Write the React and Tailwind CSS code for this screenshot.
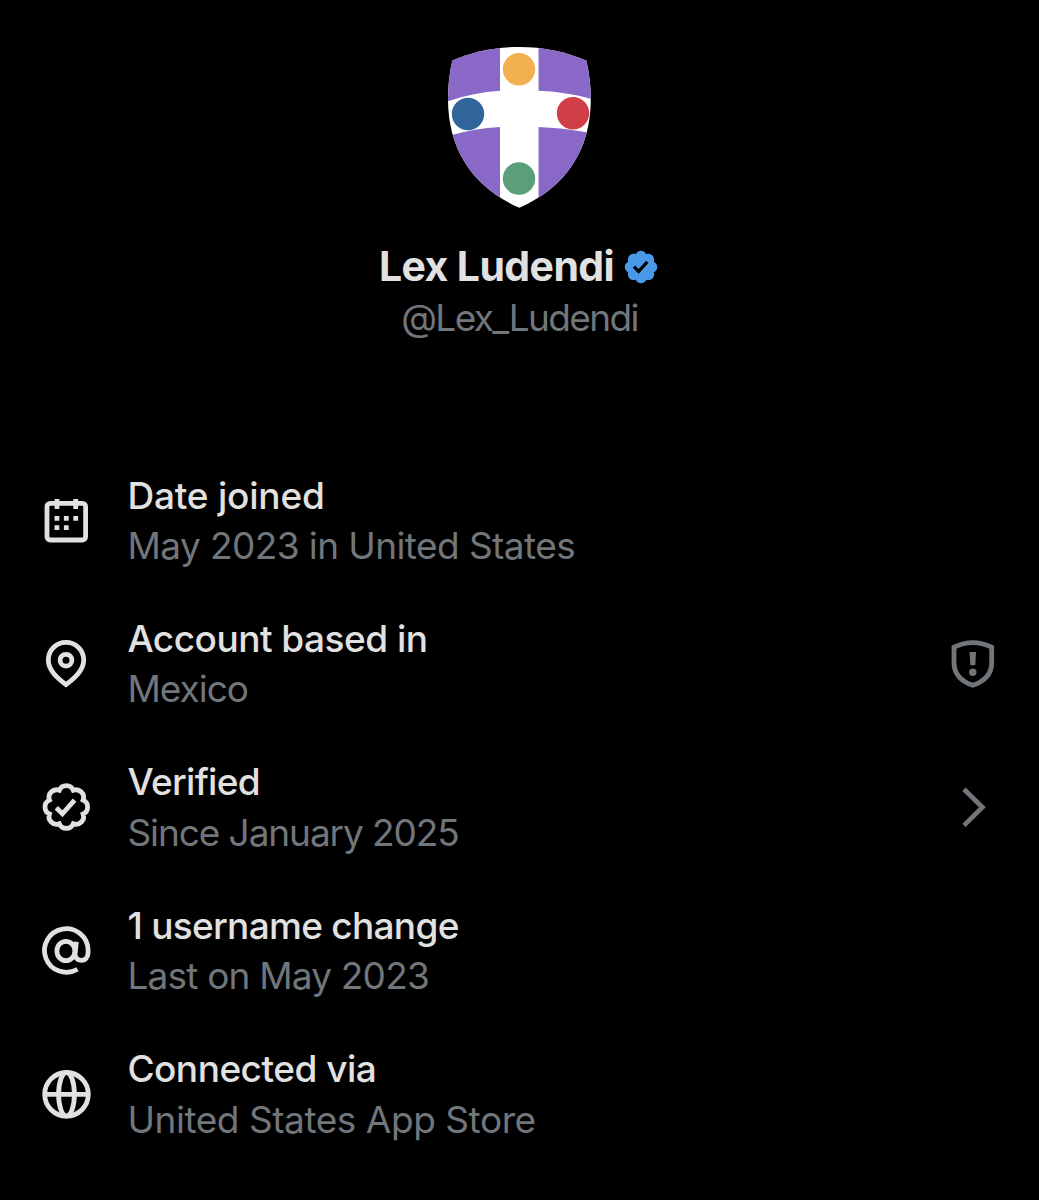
import React from 'react';

const ShieldAvatar = () => (
  <svg viewBox="0 0 180 190" className="h-[190px] w-[180px]">
    <defs>
      <clipPath id="shield">
        <path d="M22.4 30.6C44 21.5 66 17 89.5 17S135 21.5 156.3 30.6C159 42 160.8 55 160.8 69C160.8 122 134 158 89.3 177.8C45 158 18 122 18 69C18 55 19.6 42 22.4 30.6Z" />
      </clipPath>
    </defs>
    <g clipPath="url(#shield)">
      <rect width="180" height="190" fill="#fff" />
      <path d="M10 10H70V60.8C52 62 35 65.5 17 71.5L10 74Z" fill="#8a68c8" />
      <path d="M108.5 10H170V71L161 68.8C143 64 126 61.5 108.5 60.8Z" fill="#8a68c8" />
      <path d="M10 108L20 105.5C37 100.5 53 97.8 70 97V190H10Z" fill="#8a68c8" />
      <path d="M108.5 97C124 97.5 141 99.5 158 102.5L170 105V190H108.5Z" fill="#8a68c8" />
    </g>
    <circle cx="89" cy="39.3" r="16.2" fill="#f2b04e" />
    <circle cx="38" cy="84" r="16.2" fill="#31659c" />
    <circle cx="143" cy="83.2" r="16.2" fill="#d03e48" />
    <circle cx="89" cy="148.5" r="16.2" fill="#5a9f78" />
  </svg>
);

const VerifiedBadge = () => (
  <svg viewBox="0 0 22 22" className="h-[38px] w-[38px]" fill="#4a99e9">
    <path d="M20.396 11c-.018-.646-.215-1.275-.57-1.816-.354-.54-.852-.972-1.438-1.246.223-.607.27-1.264.14-1.897-.131-.634-.437-1.218-.882-1.687-.47-.445-1.053-.75-1.687-.882-.633-.13-1.29-.083-1.897.14-.273-.587-.704-1.086-1.245-1.44S11.647 1.62 11 1.604c-.646.017-1.273.213-1.813.568s-.969.854-1.24 1.44c-.608-.223-1.267-.272-1.902-.14-.635.13-1.22.436-1.69.882-.445.47-.749 1.055-.878 1.688-.13.633-.08 1.29.144 1.896-.587.274-1.087.705-1.443 1.245-.356.54-.555 1.17-.574 1.817.02.647.218 1.276.574 1.817.356.54.856.972 1.443 1.245-.224.606-.274 1.263-.144 1.896.13.634.433 1.218.877 1.688.47.443 1.054.747 1.687.878.633.132 1.29.084 1.897-.136.274.586.705 1.084 1.246 1.439.54.354 1.17.551 1.816.569.647-.016 1.276-.213 1.817-.567s.972-.854 1.245-1.44c.604.239 1.266.296 1.903.164.636-.132 1.22-.447 1.68-.907.46-.46.776-1.044.908-1.681s.075-1.299-.165-1.903c.586-.274 1.084-.705 1.439-1.246.354-.54.551-1.17.569-1.816zM9.662 14.85l-3.429-3.428 1.293-1.302 2.072 2.072 4.4-4.794 1.347 1.246z" />
  </svg>
);

const Icon = ({ children, className = 'text-[#e1e1e1]' }) => (
  <svg
    viewBox="0 0 60 60"
    className={`h-[60px] w-[60px] shrink-0 ${className}`}
    fill="none"
    stroke="currentColor"
    strokeWidth="4.8"
  >
    {children}
  </svg>
);

const CalendarIcon = () => (
  <Icon>
    <rect x="11" y="12.3" width="38.6" height="36.7" rx="3.2" />
    <path d="M21 8V18M39.7 8V18" />
    <path d="M18.5 27.3h4.8M27.9 27.3h4.8M37.3 27.3h4.8M18.5 36.6h4.8M27.9 36.6h4.8" />
  </Icon>
);

const PinIcon = () => (
  <Icon>
    <path d="M30 50.6C22 44.5 12.3 36.5 12.3 26A17.7 17.7 0 0 1 47.7 26C47.7 36.5 38 44.5 30 50.6Z" />
    <circle cx="30" cy="26.2" r="5.9" />
  </Icon>
);

const SealIcon = () => (
  <Icon>
    <path d="M23.3 12.3A7.6 7.6 0 0 1 37.3 12.3A7.6 7.6 0 0 1 47.1 22.1A7.6 7.6 0 0 1 47.1 36A7.6 7.6 0 0 1 37.3 45.8A7.6 7.6 0 0 1 23.3 45.8A7.6 7.6 0 0 1 13.5 36A7.6 7.6 0 0 1 13.5 22.1A7.6 7.6 0 0 1 23.3 12.3Z" />
    <path d="M20.3 29.8L26.4 35.8L38.6 22.2" />
  </Icon>
);

const AtIcon = () => (
  <Icon>
    <path d="M41.5 48.2A21.8 21.8 0 1 1 52.1 29.3V31C52.1 36 49.6 39.3 45.4 39.3C41 39.3 38.8 36.5 39.1 32.5L40.3 20.8" />
    <ellipse cx="29.9" cy="30" rx="9" ry="9.7" />
  </Icon>
);

const GlobeIcon = () => (
  <Icon>
    <circle cx="30.5" cy="29.3" r="21.8" />
    <ellipse cx="30.5" cy="29.3" rx="7.9" ry="21.8" />
    <path d="M8.6 29.3H52.4" />
  </Icon>
);

const ShieldAlertIcon = () => (
  <Icon className="text-[#71767b]">
    <path d="M11 13.2Q29.8 4 48.7 13.2V28.5C48.7 40.5 41 47.5 29.8 51.3C18.7 47.5 11 40.5 11 28.5Z" />
    <path d="M26.6 18H33L32.3 31.3H27.3Z" fill="currentColor" stroke="none" />
    <circle cx="29.8" cy="38.3" r="3.7" fill="currentColor" stroke="none" />
  </Icon>
);

const ChevronIcon = () => (
  <Icon className="text-[#71767b]">
    <path d="M21 11.2L39.4 29.3L21 47.4" />
  </Icon>
);

const rows = [
  { icon: CalendarIcon, title: 'Date joined', text: 'May 2023 in United States', titleClass: 'tracking-[-0.2px]', textClass: 'tracking-[-0.58px]' },
  { icon: PinIcon, title: 'Account based in', text: 'Mexico', titleClass: 'tracking-[-0.5px]', textClass: 'tracking-[-1px]', action: ShieldAlertIcon },
  { icon: SealIcon, title: 'Verified', text: 'Since January 2025', titleClass: 'tracking-[-0.7px]', textClass: 'tracking-[-1.08px]', action: ChevronIcon },
  { icon: AtIcon, title: '1 username change', text: 'Last on May 2023', titleClass: 'tracking-[-0.7px]', textClass: 'tracking-[-0.8px]' },
  { icon: GlobeIcon, title: 'Connected via', text: 'United States App Store', titleClass: 'tracking-[-0.5px]', textClass: 'tracking-[-0.45px]' },
];

export default function App() {
  return (
    <main className="h-[1200px] w-[1039px] overflow-hidden bg-black pt-[30px] font-['Inter',sans-serif] text-[#e1e1e1]">
      <header className="flex flex-col items-center">
        <ShieldAvatar />
        <div className="mt-[21px] flex h-[51px] items-center gap-2">
          <h1 className="-mt-0.5 text-[41px] leading-[50px] font-bold tracking-[-0.6px] whitespace-nowrap">Lex Ludendi</h1>
          <VerifiedBadge />
        </div>
        <p className="mt-px text-[37px] leading-[50px] tracking-[-1.65px] text-[#71767b]">@Lex_Ludendi</p>
      </header>

      <ul className="mt-[127.5px] flex flex-col gap-[42.4px] px-9">
        {rows.map(({ icon: RowIcon, action: Action, ...row }) => (
          <li key={row.title} className="flex h-[101px] items-center">
            <RowIcon />
            <div className="ml-[31.4px] flex-1 text-[37px] leading-[50.5px] whitespace-nowrap">
              <p className={`font-medium ${row.titleClass}`}>{row.title}</p>
              <p className={`text-[#71767b] ${row.textClass}`}>{row.text}</p>
            </div>
            {Action && <Action />}
          </li>
        ))}
      </ul>
    </main>
  );
}
